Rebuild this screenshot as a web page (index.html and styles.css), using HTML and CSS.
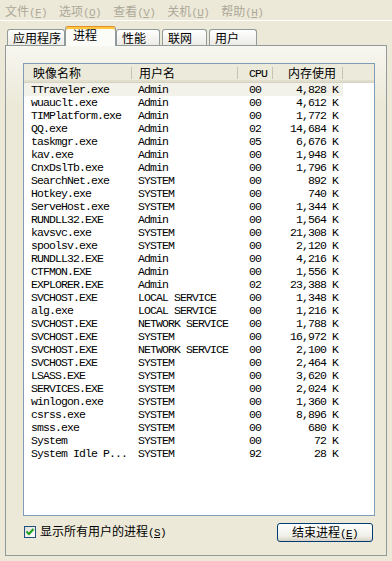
FILE: index.html
```html
<!DOCTYPE html>
<html lang="zh-CN">
<head>
    <meta charset="UTF-8">
    <meta name="viewport" content="width=device-width, initial-scale=1.0">
    <title>Windows 任务管理器</title>
    <link rel="stylesheet" href="styles.css">
</head>
<body>
    <div class="menubar">
        <span class="menu-item">文件<span class="key">(<u>F</u>)</span></span>
        <span class="menu-item">选项<span class="key">(<u>O</u>)</span></span>
        <span class="menu-item">查看<span class="key">(<u>V</u>)</span></span>
        <span class="menu-item">关机<span class="key">(<u>U</u>)</span></span>
        <span class="menu-item">帮助<span class="key">(<u>H</u>)</span></span>
    </div>

    <div class="tabs">
        <div class="tab">应用程序</div>
        <div class="tab active">进程</div>
        <div class="tab">性能</div>
        <div class="tab">联网</div>
        <div class="tab">用户</div>
    </div>

    <div class="panel">
        <div class="list">
            <div class="list-head">
                <div class="hcell name">映像名称</div>
                <div class="hcell user">用户名</div>
                <div class="hcell cpu mono">CPU</div>
                <div class="hcell mem">内存使用</div>
                <div class="hcell rest"></div>
            </div>
            <div class="rows">
                <div class="row sel"><span class="name">TTraveler.exe</span><span class="user">Admin</span><span class="cpu">00</span><span class="mem">4,828 K</span></div>
                <div class="row"><span class="name">wuauclt.exe</span><span class="user">Admin</span><span class="cpu">00</span><span class="mem">4,612 K</span></div>
                <div class="row"><span class="name">TIMPlatform.exe</span><span class="user">Admin</span><span class="cpu">00</span><span class="mem">1,772 K</span></div>
                <div class="row"><span class="name">QQ.exe</span><span class="user">Admin</span><span class="cpu">02</span><span class="mem">14,684 K</span></div>
                <div class="row"><span class="name">taskmgr.exe</span><span class="user">Admin</span><span class="cpu">05</span><span class="mem">6,676 K</span></div>
                <div class="row"><span class="name">kav.exe</span><span class="user">Admin</span><span class="cpu">00</span><span class="mem">1,948 K</span></div>
                <div class="row"><span class="name">CnxDslTb.exe</span><span class="user">Admin</span><span class="cpu">00</span><span class="mem">1,796 K</span></div>
                <div class="row"><span class="name">SearchNet.exe</span><span class="user">SYSTEM</span><span class="cpu">00</span><span class="mem">892 K</span></div>
                <div class="row"><span class="name">Hotkey.exe</span><span class="user">SYSTEM</span><span class="cpu">00</span><span class="mem">740 K</span></div>
                <div class="row"><span class="name">ServeHost.exe</span><span class="user">SYSTEM</span><span class="cpu">00</span><span class="mem">1,344 K</span></div>
                <div class="row"><span class="name">RUNDLL32.EXE</span><span class="user">Admin</span><span class="cpu">00</span><span class="mem">1,564 K</span></div>
                <div class="row"><span class="name">kavsvc.exe</span><span class="user">SYSTEM</span><span class="cpu">00</span><span class="mem">21,308 K</span></div>
                <div class="row"><span class="name">spoolsv.exe</span><span class="user">SYSTEM</span><span class="cpu">00</span><span class="mem">2,120 K</span></div>
                <div class="row"><span class="name">RUNDLL32.EXE</span><span class="user">Admin</span><span class="cpu">00</span><span class="mem">4,216 K</span></div>
                <div class="row"><span class="name">CTFMON.EXE</span><span class="user">Admin</span><span class="cpu">00</span><span class="mem">1,556 K</span></div>
                <div class="row"><span class="name">EXPLORER.EXE</span><span class="user">Admin</span><span class="cpu">02</span><span class="mem">23,388 K</span></div>
                <div class="row"><span class="name">SVCHOST.EXE</span><span class="user">LOCAL SERVICE</span><span class="cpu">00</span><span class="mem">1,348 K</span></div>
                <div class="row"><span class="name">alg.exe</span><span class="user">LOCAL SERVICE</span><span class="cpu">00</span><span class="mem">1,216 K</span></div>
                <div class="row"><span class="name">SVCHOST.EXE</span><span class="user">NETWORK SERVICE</span><span class="cpu">00</span><span class="mem">1,788 K</span></div>
                <div class="row"><span class="name">SVCHOST.EXE</span><span class="user">SYSTEM</span><span class="cpu">00</span><span class="mem">16,972 K</span></div>
                <div class="row"><span class="name">SVCHOST.EXE</span><span class="user">NETWORK SERVICE</span><span class="cpu">00</span><span class="mem">2,100 K</span></div>
                <div class="row"><span class="name">SVCHOST.EXE</span><span class="user">SYSTEM</span><span class="cpu">00</span><span class="mem">2,464 K</span></div>
                <div class="row"><span class="name">LSASS.EXE</span><span class="user">SYSTEM</span><span class="cpu">00</span><span class="mem">3,620 K</span></div>
                <div class="row"><span class="name">SERVICES.EXE</span><span class="user">SYSTEM</span><span class="cpu">00</span><span class="mem">2,024 K</span></div>
                <div class="row"><span class="name">winlogon.exe</span><span class="user">SYSTEM</span><span class="cpu">00</span><span class="mem">1,360 K</span></div>
                <div class="row"><span class="name">csrss.exe</span><span class="user">SYSTEM</span><span class="cpu">00</span><span class="mem">8,896 K</span></div>
                <div class="row"><span class="name">smss.exe</span><span class="user">SYSTEM</span><span class="cpu">00</span><span class="mem">680 K</span></div>
                <div class="row"><span class="name">System</span><span class="user">SYSTEM</span><span class="cpu">00</span><span class="mem">72 K</span></div>
                <div class="row"><span class="name">System Idle P...</span><span class="user">SYSTEM</span><span class="cpu">92</span><span class="mem">28 K</span></div>
            </div>
        </div>

        <div class="bottom">
            <label class="check">
                <span class="box">
                    <svg width="10" height="10" viewBox="0 0 10 10">
                        <polyline points="1.5,4.5 4,7 8.5,2" fill="none" stroke="#21a121" stroke-width="2"/>
                    </svg>
                </span>
                <span>显示所有用户的进程<span class="key">(<u>S</u>)</span></span>
            </label>
            <button class="btn">结束进程<span class="key">(<u>E</u>)</span></button>
        </div>
    </div>
</body>
</html>
```

FILE: styles.css
```css
* {
    box-sizing: border-box;
}
body {
    margin: 0;
    width: 392px;
    height: 561px;
    overflow: hidden;
    background-color: #ece9d8;
    font-family: "Noto Sans CJK SC", sans-serif;
    font-size: 12px;
    color: #000;
}
.key, .mono {
    font-family: "Liberation Mono", monospace;
    font-size: 11px;
    letter-spacing: -0.6px;
}

/* menu */
.menubar {
    display: flex;
    height: 21px;
    margin-left: -1px;
    border-bottom: 1px solid #fff;
}
.menu-item {
    padding: 1px 6px 0;
    line-height: 19px;
    color: #aca899;
}

/* tabs */
.tabs {
    display: flex;
    align-items: flex-end;
    gap: 2px;
    height: 24px;
    padding-left: 7px;
}
.tab {
    height: 16px;
    line-height: 15px;
    padding-left: 5px;
    border: 1px solid #919b9c;
    border-bottom: none;
    border-radius: 3px 3px 0 0;
    background: linear-gradient(#ffffff, #ecebe6);
    white-space: nowrap;
}
.tab:nth-child(1) { width: 58px; }
.tab:nth-child(3) { width: 44px; }
.tab:nth-child(4) { width: 45px; }
.tab:nth-child(5) { width: 48px; }
.tab.active {
    position: relative;
    z-index: 1;
    width: 51px;
    height: 20px;
    margin: 0 -2px -1px;
    padding: 1px 0 0 7px;
    line-height: 14px;
    border-top: 1px solid #e68b2c;
    box-shadow: inset 0 2px #ffc73c;
    background: #fbfbf8;
}

/* panel */
.panel {
    margin-left: 5px;
    width: 382px;
    height: 511px;
    padding: 17px 11px 0 17px;
    border: 1px solid #919b9c;
    background: linear-gradient(#f7f6f0, #ece9d8 60px);
}
.list {
    height: 453px;
    border: 1px solid #7f9db9;
    background: #fff;
}
.list-head {
    display: grid;
    grid-template-columns: 108px 106px 35px 70px 1fr;
    height: 19px;
    background: #ebeadb;
    border-bottom: 1px solid #d6d2c2;
    box-shadow: inset 0 -2px #e2decd;
}
.hcell {
    line-height: 18px;
    white-space: nowrap;
    background: linear-gradient(#c7c5b2, #c7c5b2) no-repeat right 3px / 1px 12px;
}
.hcell.rest {
    background: none;
}
.hcell.name { padding-left: 9px; }
.hcell.user { padding-left: 7px; }
.hcell.cpu { padding-left: 11px; line-height: 19px; font-size: 11.5px; letter-spacing: -0.9px; }
.hcell.mem { text-align: right; padding-right: 7px; }

.row {
    display: grid;
    grid-template-columns: 108px 106px 35px 70px;
    width: 319px;
    height: 13px;
    line-height: 13px;
    font-family: "Liberation Mono", monospace;
    font-size: 11.5px;
    letter-spacing: -0.9px;
    white-space: pre;
}
.row.sel {
    background: #f3f2ea;
}
.row .name { padding-left: 7px; }
.row .user { padding-left: 6px; overflow: hidden; }
.row .cpu { padding-left: 11px; }
.row .mem { text-align: right; padding-right: 5px; }

/* bottom bar */
.bottom {
    display: flex;
    justify-content: space-between;
    align-items: flex-start;
    margin-top: 7px;
    padding: 0 2px 0 1px;
}
.check {
    display: flex;
    align-items: center;
    gap: 4px;
    margin-top: 1px;
    line-height: 13px;
}
.box {
    display: flex;
    align-items: center;
    justify-content: center;
    width: 12px;
    height: 12px;
    border: 1px solid #1c5180;
    background: linear-gradient(135deg, #dcdcd7, #ffffff);
}
.btn {
    width: 96px;
    height: 19px;
    padding: 0 0 2px;
    border: 1px solid #003c74;
    border-radius: 3px;
    background: linear-gradient(#ffffff, #f0f0ea 70%, #d6d0c5);
    font-family: "Noto Sans CJK SC", sans-serif;
    font-size: 12px;
    line-height: 16px;
    color: #000;
}
```
